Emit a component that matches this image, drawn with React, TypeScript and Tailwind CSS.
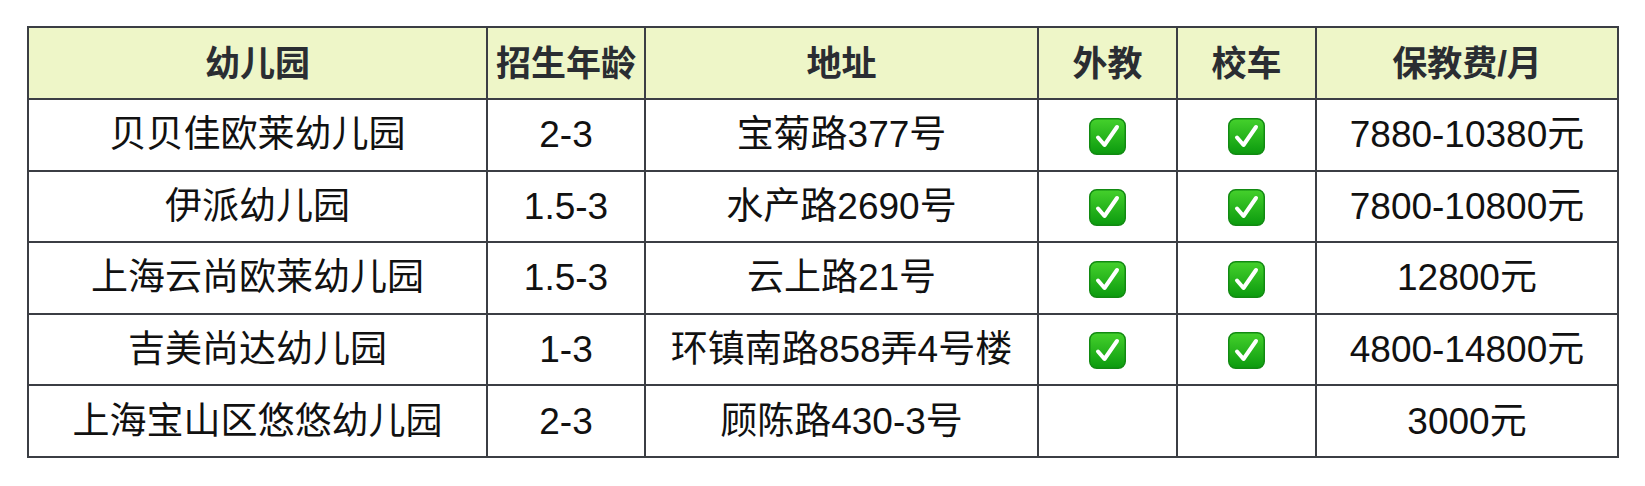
import React from "react";

const Check = () => (
  <svg width="37" height="37" viewBox="0 0 37 37" className="inline-block align-middle">
    <defs>
      <linearGradient id="g" x1="0" y1="0" x2="0" y2="1">
        <stop offset="0" stopColor="#45d12c" />
        <stop offset="1" stopColor="#0b9a0e" />
      </linearGradient>
    </defs>
    <rect x="0.75" y="0.75" width="35.5" height="35.5" rx="7" fill="url(#g)" stroke="#128a12" strokeWidth="1.5" />
    <path d="M9 19.5 L15.5 27 L28 9" fill="none" stroke="#fff" strokeWidth="4" strokeLinecap="round" strokeLinejoin="round" />
  </svg>
);

const rows = [
  ["贝贝佳欧莱幼儿园", "2-3", "宝菊路377号", true, true, "7880-10380元"],
  ["伊派幼儿园", "1.5-3", "水产路2690号", true, true, "7800-10800元"],
  ["上海云尚欧莱幼儿园", "1.5-3", "云上路21号", true, true, "12800元"],
  ["吉美尚达幼儿园", "1-3", "环镇南路858弄4号楼", true, true, "4800-14800元"],
  ["上海宝山区悠悠幼儿园", "2-3", "顾陈路430-3号", false, false, "3000元"],
] as const;

const headers = ["幼儿园", "招生年龄", "地址", "外教", "校车", "保教费/月"];
const widths = [459, 158, 393, 139, 139, 302];

export default function App() {
  return (
    <div
      className="w-[1645px] h-[486px] bg-white pt-[26px] pl-[27px]"
      style={{ fontFamily: '"Liberation Sans", "Noto Sans CJK SC", sans-serif' }}
    >
      <table className="table-fixed border-collapse w-[1590px] text-[37px] leading-none">
        <colgroup>
          {widths.map((w, i) => (
            <col key={i} style={{ width: w }} />
          ))}
        </colgroup>
        <thead>
          <tr className="h-[72px] bg-[#eef6c8]">
            {headers.map((h) => (
              <th key={h} className="border-2 border-[#3b3e44] text-center text-[35px] font-bold text-[#2a2d32] p-0">
                {h}
              </th>
            ))}
          </tr>
        </thead>
        <tbody>
          {rows.map((r, i) => (
            <tr key={i} className="h-[71.6px]">
              {r.map((c, j) => (
                <td key={j} className="border-2 border-[#3b3e44] text-center text-[#111] p-0">
                  {typeof c === "boolean" ? (c ? <Check /> : null) : c}
                </td>
              ))}
            </tr>
          ))}
        </tbody>
      </table>
    </div>
  );
}
